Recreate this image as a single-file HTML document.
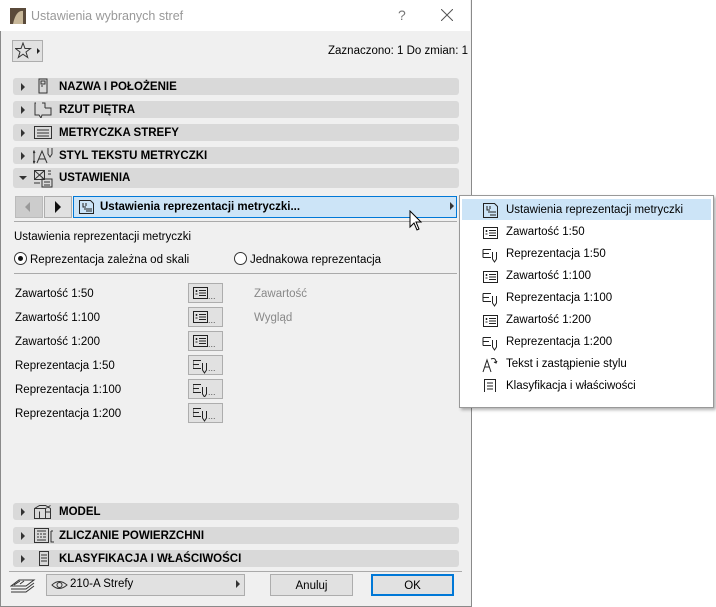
<!DOCTYPE html><html><head><style>
body{margin:0;width:716px;height:607px;background:#fff;font-family:"Liberation Sans",sans-serif;font-size:12px;position:relative;overflow:hidden;color:#000}
.a{position:absolute}
#dlg{left:0;top:0;width:470px;height:606px;background:#f0f0f0;border:1px solid #8a8a8a;border-top:none}
#tb{left:0;top:0;width:470px;height:31px;background:#fff}
.bar{position:absolute;left:13px;width:446px;height:17px;background:#d9d9d9;border-radius:3px;font-weight:bold;font-size:11.5px;line-height:19px}
.bar .t{position:absolute;left:46px}
.bar .tri{position:absolute;left:8px;top:5px;width:0;height:0;border-left:4px solid #333;border-top:4px solid transparent;border-bottom:4px solid transparent}
.bar svg{position:absolute;left:20px;top:0}
.row{position:absolute;left:15px;font-size:11.5px}
.btn{position:absolute;left:188px;width:33px;height:18px;border:1px solid #adadad;background:#e1e1e1}
.mi{position:absolute;left:506px;font-size:11.5px}
</style></head><body>
<div id="dlg" class="a"></div>
<div id="tb" class="a"></div>
<svg class="a" style="left:10px;top:8px" width="16" height="16"><rect width="16" height="16" fill="#5a4a3a"/><path d="M3 16 Q6 2 13 3 L13 16" fill="#c8b89a"/></svg>
<div class="a" style="left:31px;top:9px;font-size:12.5px;color:#999">Ustawienia wybranych stref</div>
<div class="a" style="left:398px;top:7px;font-size:14px;color:#777">?</div>
<svg class="a" style="left:441px;top:9px" width="12" height="12"><path d="M0 0L12 12M12 0L0 12" stroke="#555" stroke-width="1"/></svg>
<div class="a" style="left:12px;top:40px;width:29px;height:20px;border:1px solid #adadad;background:#e1e1e1"></div>
<svg class="a" style="left:15px;top:42px" width="26" height="18"><path d="M8 1L10 6.5 15.5 6.5 11 10 12.7 15.5 8 12.2 3.3 15.5 5 10 .5 6.5 6 6.5Z" fill="none" stroke="#333"/><path d="M22 6L25 9 22 12Z" fill="#222"/></svg>
<div class="a" style="left:328px;top:45px;font-size:11.5px">Zaznaczono: 1 Do zmian: 1</div>

<div class="bar" style="top:78px"><div class="tri"></div><svg width="20" height="17"><rect x="6" y="1" width="8" height="14" fill="none" stroke="#333"/><rect x="8" y="3" width="4" height="3" fill="none" stroke="#333"/><path d="M8 8h2" stroke="#333"/></svg><span class="t">NAZWA I POŁOŻENIE</span></div>
<div class="bar" style="top:101px"><div class="tri"></div><svg width="22" height="17"><path d="M3 2h-1v12h4l2 3 1-3h9v-7h-6M12 7V2h-3" fill="none" stroke="#333"/></svg><span class="t">RZUT PIĘTRA</span></div>
<div class="bar" style="top:124px"><div class="tri"></div><svg width="22" height="17"><rect x="1.5" y="2.5" width="17" height="12" fill="none" stroke="#333"/><path d="M4 6h12M4 9h12M4 12h12" stroke="#333"/></svg><span class="t">METRYCZKA STREFY</span></div>
<div class="bar" style="top:147px"><div class="tri"></div><svg width="24" height="17"><path d="M1 4v12M0 6l1-2 1 2M0 14l1 2 1-2M4 16l5-12 5 12M6 12h6M15 1v6l2 3 2-3V1" fill="none" stroke="#333"/></svg><span class="t">STYL TEKSTU METRYCZKI</span></div>
<div class="bar" style="top:168px;height:20px;line-height:21px"><div class="a" style="left:6px;top:8px;border-top:4px solid #333;border-left:4px solid transparent;border-right:4px solid transparent"></div><svg width="24" height="20"><rect x="1.5" y="2.5" width="10" height="9" fill="none" stroke="#333"/><path d="M2 3l9 8M11 3l-9 8M9 11h10v8H9ZM11 14h6M11 17h6M15 3h3M15 6h3M1 15h6" fill="none" stroke="#333"/></svg><span class="t">USTAWIENIA</span></div>

<div class="a" style="left:15px;top:196px;width:26px;height:20px;background:#ccc;border:1px solid #bbb"></div>
<div class="a" style="left:25px;top:202px;border-right:5px solid #999;border-top:5px solid transparent;border-bottom:5px solid transparent"></div>
<div class="a" style="left:44px;top:196px;width:26px;height:20px;background:#e1e1e1;border:1px solid #adadad"></div>
<div class="a" style="left:55px;top:201px;border-left:6px solid #111;border-top:6px solid transparent;border-bottom:6px solid transparent"></div>
<div class="a" style="left:73px;top:196px;width:382px;height:20px;background:#cce4f7;border:1px solid #0078d7"></div>
<svg class="a" style="left:78px;top:199px" width="18" height="16"><path d="M1.5 1.5h11l3 3v10h-14Z M5 4v4h3M8 4v3M6 10h8M8 12h6" fill="none" stroke="#222"/></svg>
<div class="a" style="left:100px;top:201px;font-weight:bold;font-size:11.5px">Ustawienia reprezentacji metryczki...</div>
<div class="a" style="left:450px;top:202px;border-left:4px solid #333;border-top:4px solid transparent;border-bottom:4px solid transparent"></div>
<div class="a" style="left:14px;top:221px;width:443px;height:1px;background:#aaa"></div>
<div class="a" style="left:14px;top:231px;font-size:11.5px">Ustawienia reprezentacji metryczki</div>
<div class="a" style="left:14px;top:252px;width:11px;height:11px;border:1px solid #333;border-radius:50%;background:#fff"></div>
<div class="a" style="left:18px;top:256px;width:5px;height:5px;border-radius:50%;background:#111"></div>
<div class="a" style="left:30px;top:254px;font-size:11.5px">Reprezentacja zależna od skali</div>
<div class="a" style="left:234px;top:252px;width:11px;height:11px;border:1px solid #333;border-radius:50%;background:#fff"></div>
<div class="a" style="left:250px;top:254px;font-size:11.5px">Jednakowa reprezentacja</div>
<div class="a" style="left:14px;top:273px;width:443px;height:1px;background:#aaa"></div>

<div class="row" style="top:288px">Zawartość 1:50</div>
<div class="row" style="top:312px">Zawartość 1:100</div>
<div class="row" style="top:336px">Zawartość 1:200</div>
<div class="row" style="top:360px">Reprezentacja 1:50</div>
<div class="row" style="top:384px">Reprezentacja 1:100</div>
<div class="row" style="top:408px">Reprezentacja 1:200</div>
<div class="a" style="left:254px;top:288px;color:#888;font-size:11.5px">Zawartość</div>
<div class="a" style="left:254px;top:312px;color:#888;font-size:11.5px">Wygląd</div>

<svg width="0" height="0" style="position:absolute"><defs>
<g id="zi"><rect x="0.5" y="0.5" width="14" height="11" fill="none" stroke="#222"/><path d="M2.5 4h2M3.5 3v2M2.5 7h2M6 3.5h7M6 6h7M6 8.5h7" stroke="#222" fill="none"/></g>
<g id="ri"><path d="M0 1.5h8M0 5.5h6M0 9.5h8M0 1.5v8M9.5 4v7l2 3 2-3V4" fill="none" stroke="#222"/></g>
</defs></svg>
<div class="btn" style="top:283px"></div><div class="btn" style="top:307px"></div><div class="btn" style="top:331px"></div>
<div class="btn" style="top:355px"></div><div class="btn" style="top:379px"></div><div class="btn" style="top:403px"></div>
<svg class="a" style="left:193px;top:287px" width="30" height="110"><use href="#zi" y="0"/><use href="#zi" y="24"/><use href="#zi" y="48"/><use href="#ri" y="72"/><use href="#ri" y="96"/><text x="15" y="12" font-size="9" fill="#555">...</text><text x="15" y="36" font-size="9" fill="#555">...</text><text x="15" y="60" font-size="9" fill="#555">...</text><text x="15" y="84" font-size="9" fill="#555">...</text><text x="15" y="108" font-size="9" fill="#555">...</text></svg>
<svg class="a" style="left:193px;top:407px" width="30" height="16"><use href="#ri" y="0"/><text x="15" y="12" font-size="9" fill="#555">...</text></svg>

<div class="bar" style="top:503px"><div class="tri"></div><svg width="24" height="17"><path d="M1.5 5.5l5-3h6l5 3v10h-16ZM1.5 5.5h11v10M12.5 5.5l5-3M6.5 8.5v7M17 9h-4" fill="none" stroke="#333"/></svg><span class="t">MODEL</span></div>
<div class="bar" style="top:527px"><div class="tri"></div><svg width="24" height="17"><rect x="1.5" y="1.5" width="14" height="14" fill="none" stroke="#333"/><path d="M4 4h9M4 7h2M7 7h2M10 7h3M4 10h2M7 10h2M10 10h3M4 13h9M18 4v11h3M18 4h2" fill="none" stroke="#333"/></svg><span class="t">ZLICZANIE POWIERZCHNI</span></div>
<div class="bar" style="top:550px"><div class="tri"></div><svg width="22" height="17"><path d="M6.5 1.5h9v14h-9Z M8 5h6M8 8h6M8 11h6" fill="none" stroke="#333"/></svg><span class="t">KLASYFIKACJA I WŁAŚCIWOŚCI</span></div>
<div class="a" style="left:9px;top:571px;width:453px;height:1px;background:#aaa"></div>
<svg class="a" style="left:10px;top:577px" width="30" height="17"><path d="M1 9l8-6h15l-8 6ZM1 12l1 0M1 12h15l8-6M1 15h15l8-6M4 8l6-4M10 7l4-3" fill="none" stroke="#333"/></svg>
<div class="a" style="left:46px;top:574px;width:197px;height:20px;background:#e1e1e1;border:1px solid #adadad"></div>
<svg class="a" style="left:51px;top:579px" width="18" height="12"><path d="M1 6Q8-1 16 6Q8 13 1 6Z" fill="none" stroke="#333"/><circle cx="8.5" cy="6" r="2.5" fill="none" stroke="#333"/></svg>
<div class="a" style="left:70px;top:578px;font-size:11.5px">210-A Strefy</div>
<div class="a" style="left:236px;top:580px;border-left:4px solid #333;border-top:4px solid transparent;border-bottom:4px solid transparent"></div>
<div class="a" style="left:270px;top:574px;width:81px;height:20px;background:#e1e1e1;border:1px solid #adadad;text-align:center;line-height:22px;font-size:11.5px">Anuluj</div>
<div class="a" style="left:371px;top:574px;width:79px;height:18px;background:#e1e1e1;border:2px solid #0078d7;text-align:center;line-height:20px;font-size:11.5px">OK</div>

<div class="a" style="left:459px;top:195px;width:253px;height:211px;background:#fff;border:1px solid #999;box-shadow:2px 2px 3px rgba(0,0,0,.3)"></div>
<div class="a" style="left:462px;top:199px;width:249px;height:21px;background:#cce4f7"></div>
<svg class="a" style="left:482px;top:202px" width="20" height="190">
<path d="M1.5 1.5h11l3 3v11h-14ZM5 4v4h3M8 4v3M6 10h8M8 13h6" fill="none" stroke="#222"/>
<use href="#zi" x="1" y="25"/><use href="#ri" x="1" y="46"/><use href="#zi" x="1" y="69"/><use href="#ri" x="1" y="90"/><use href="#zi" x="1" y="113"/><use href="#ri" x="1" y="134"/>
<path d="M1 170l4-12 4 12M3 165h4M9 157q5-2 5 4l-2-1M14 161l1-2" fill="none" stroke="#222"/>
<path d="M2.5 177.5h11v14h-11ZM5 181h6M5 184h6M5 187h6" fill="none" stroke="#222"/>
</svg>
<div class="mi" style="top:204px">Ustawienia reprezentacji metryczki</div>
<div class="mi" style="top:226px">Zawartość 1:50</div>
<div class="mi" style="top:248px">Reprezentacja 1:50</div>
<div class="mi" style="top:270px">Zawartość 1:100</div>
<div class="mi" style="top:292px">Reprezentacja 1:100</div>
<div class="mi" style="top:314px">Zawartość 1:200</div>
<div class="mi" style="top:336px">Reprezentacja 1:200</div>
<div class="mi" style="top:358px">Tekst i zastąpienie stylu</div>
<div class="mi" style="top:380px">Klasyfikacja i właściwości</div>
<svg class="a" style="left:409px;top:210px" width="14" height="22"><path d="M1 1v16l4-4 3 7 2-1-3-7h5Z" fill="#fff" stroke="#000"/></svg>
</body></html>
